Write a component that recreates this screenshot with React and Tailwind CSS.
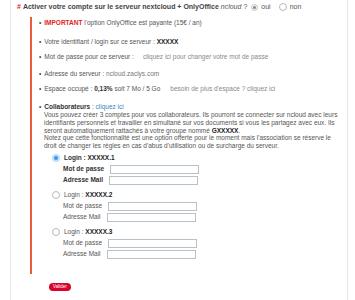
import React from 'react'

const Radio = ({ checked, variant = 'blue' }) => {
  if (!checked) {
    return <span className="inline-block w-[8px] h-[8px] rounded-full border border-[#b9b9b9] bg-white shrink-0" />
  }
  if (variant === 'gray') {
    return (
      <span className="inline-flex items-center justify-center w-[7px] h-[7px] rounded-full border border-[#c4c4c4] bg-[#f4f4f4] shrink-0">
        <span className="w-[3px] h-[3px] rounded-full bg-[#888]" />
      </span>
    )
  }
  return (
    <span className="inline-flex items-center justify-center w-[8px] h-[8px] rounded-full bg-[#bfe0fb] shrink-0">
      <span className="w-[4px] h-[4px] rounded-full bg-[#3d97e8]" />
    </span>
  )
}

const Field = ({ label, bold }) => (
  <div className="flex items-center gap-[6px] h-[11px]">
    <span className={bold ? 'font-bold text-[#333]' : 'text-[#555]'}>{label}</span>
    <span className="w-[89px] h-[9px] border border-[#b8c0c8] bg-white" />
  </div>
)

const Account = ({ n, selected }) => (
  <div>
    <div className="flex items-center gap-[4px] h-[11px] ml-[-11px]">
      <Radio checked={selected} />
      <span className={selected ? 'font-bold text-[#333]' : 'text-[#555]'}>
        Login : <b className="text-[#222]">XXXXX.{n}</b>
      </span>
    </div>
    <div className="flex flex-col">
      <Field label="Mot de passe" bold={selected} />
      <Field label="Adresse Mail" bold={selected} />
    </div>
  </div>
)

const Bullet = ({ className = '', children }) => (
  <li className={`flex gap-[3px] ${className}`}>
    <span className="text-[#444]">•</span>
    <div className="flex-1">{children}</div>
  </li>
)

export default function App() {
  return (
    <div
      className="w-[355px] h-[300px] bg-white overflow-hidden pl-[10px]"
      style={{ fontFamily: '"Liberation Sans", Arial, sans-serif' }}
    >
      <div className="w-[338px] h-full border-l border-r border-[#e6e6e6] text-[6.5px] leading-[8px] text-[#555]">
        {/* Header */}
        <div className="flex items-center pl-[6px] pt-[2px] h-[12px] text-[7px] whitespace-nowrap">
          <span className="text-[#e2231a] font-bold mr-[2px]">#</span>
          <span className="font-bold text-[#444]">
            Activer votre compte sur le serveur nextcloud + OnlyOffice
          </span>
          <span className="italic ml-[2px] text-[#555]">ncloud</span>
          <span className="ml-[2px] text-[#555]">?</span>
          <span className="ml-[4px] flex items-center gap-[3px]">
            <Radio checked variant="gray" />
            <span>oui</span>
          </span>
          <span className="ml-[8px] flex items-center gap-[3px]">
            <Radio />
            <span>non</span>
          </span>
        </div>

        {/* Details */}
        <div className="ml-[19px] mt-[5px] border-l-2 border-[#ec5a3a] pl-[7px] pb-[14px]">
          <ul className="pt-[2px]">
            <Bullet>
              <span className="text-[#e2231a] font-bold">IMPORTANT</span> l'option OnlyOffice est payante (15€ / an)
            </Bullet>
            <Bullet className="mt-[11px]">
              Votre identifiant / login sur ce serveur : <b className="text-[#222]">XXXXX</b>
            </Bullet>
            <Bullet className="mt-[7px]">
              Mot de passe pour ce serveur :<span className="ml-[9px] text-[#888]">cliquez ici pour changer votre mot de passe</span>
            </Bullet>
            <Bullet className="mt-[9px]">
              Adresse du serveur : <span className="text-[#777]">ncloud.zaclys.com</span>
            </Bullet>
            <Bullet className="mt-[7px]">
              Espace occupé : <b className="text-[#333]">0,13%</b> soit 7 Mo / 5 Go
              <span className="ml-[10px] text-[#888]">besoin de plus d'espace ? cliquez ici</span>
            </Bullet>
            <Bullet className="mt-[10px]">
              <b className="text-[#333]">Collaborateurs</b> : <span className="text-[#3a7fc4]">cliquez ici</span>
            </Bullet>
          </ul>
          <div className="ml-[5px] pr-[9px] leading-[7.8px]">
            Vous pouvez créer 3 comptes pour vos collaborateurs. Ils pourront se connecter sur ncloud avec leurs
            identifiants personnels et travailler en simultané sur vos documents si vous les partagez avec eux. Ils
            seront automatiquement rattachés à votre groupe nommé <b className="text-[#222]">GXXXXX</b>.
            <br />
            Notez que cette fonctionnalité est une option offerte pour le moment mais l'association se réserve le
            droit de changer les règles en cas d'abus d'utilisation ou de surcharge du serveur.
          </div>
          <div className="ml-[5px] pl-[19px] mt-[3px] flex flex-col gap-[4px]">
            <Account n={1} selected />
            <Account n={2} />
            <Account n={3} />
          </div>
        </div>

        {/* Submit */}
        <div className="pl-[38px] mt-[8px]">
          <button className="h-[8px] px-[4px] rounded-full bg-[#d9042b] text-white text-[4.5px] leading-[8px]">
            Valider
          </button>
        </div>
      </div>
    </div>
  )
}
